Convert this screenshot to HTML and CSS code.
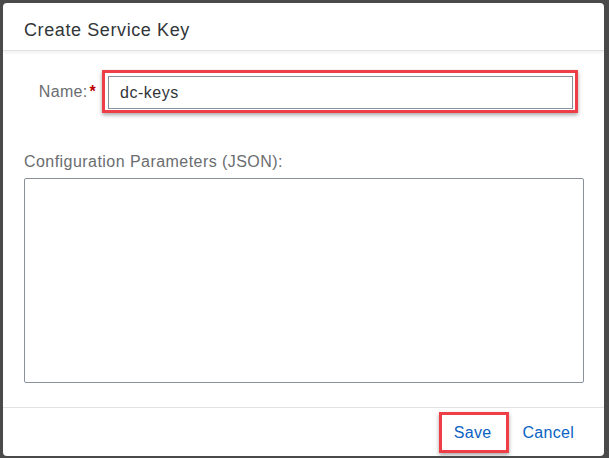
FILE: index.html
```html
<!DOCTYPE html>
<html>
<head>
<meta charset="utf-8">
<link rel="stylesheet" href="styles.css">
</head>
<body>
<div class="screen">
  <div class="dialog">
    <div class="header"><h1 class="title">Create Service Key</h1></div>
    <div class="content">
      <div class="row">
        <label class="label">Name:<span class="req">*</span></label>
        <div class="highlight">
          <div class="input">dc-keys</div>
        </div>
      </div>
      <div class="cfg-label">Configuration Parameters (JSON):</div>
      <div class="textarea"></div>
    </div>
    <div class="footer">
      <div class="highlight-btn"><span class="btn">Save</span></div>
      <span class="btn cancel">Cancel</span>
    </div>
  </div>
</div>
</body>
</html>
```
FILE: styles.css
```css
html, body {
  margin: 0;
  padding: 0;
}
body {
  background: #4a4a4a;
  font-family: "Liberation Sans", Arial, sans-serif;
}
.screen {
  width: 609px;
  height: 458px;
  box-sizing: border-box;
  padding: 3px 5px 2px 3px;
}
.dialog {
  width: 601px;
  height: 453px;
  background: #fff;
  border-radius: 4px;
  display: flex;
  flex-direction: column;
  overflow: hidden;
}
.header {
  box-sizing: border-box;
  height: 48px;
  padding: 16px 0 0 21px;
  border-bottom: 1px solid #e2e2e2;
  box-shadow: 0 2px 3px rgba(0, 0, 0, 0.06);
}
.title {
  margin: 0;
  font-size: 18px;
  line-height: 22px;
  font-weight: normal;
  color: #32363a;
  letter-spacing: 0.6px;
}
.content {
  flex: 1;
  padding: 19px 26px 0 21px;
}
.row {
  display: flex;
  align-items: center;
}
.label {
  width: 72px;
  text-align: right;
  font-size: 16px;
  line-height: 18px;
  color: #6a6d70;
  margin-right: 6px;
  letter-spacing: 0.3px;
}
.req {
  color: #bb0000;
  margin-left: 2px;
  font-weight: bold;
}
.highlight {
  border: 3px solid #ee3f48;
  padding: 3px 2px 1px 3px;
  box-shadow: 0 2px 4px rgba(0, 0, 0, 0.35);
}
.input {
  box-sizing: border-box;
  width: 465px;
  height: 33px;
  border: 1px solid #89919a;
  padding-left: 11px;
  font-size: 16px;
  line-height: 31px;
  color: #32363a;
  letter-spacing: 0.5px;
}
.cfg-label {
  margin-top: 40px;
  font-size: 16px;
  line-height: 18px;
  color: #6a6d70;
  letter-spacing: 0.45px;
  margin-left: 0;
}
.textarea {
  margin-top: 7px;
  box-sizing: border-box;
  width: 560px;
  height: 205px;
  border: 1px solid #89919a;
  border-radius: 2px;
}
.footer {
  box-sizing: border-box;
  height: 49px;
  border-top: 1px solid #e2e2e2;
  display: flex;
  justify-content: flex-end;
  align-items: flex-start;
  padding: 4px 30px 0 0;
}
.highlight-btn {
  box-sizing: border-box;
  height: 41px;
  border: 3px solid #ee3f48;
  padding: 0 15px 0 12px;
  box-shadow: 0 2px 4px rgba(0, 0, 0, 0.35);
}
.btn {
  display: inline-block;
  font-size: 16px;
  line-height: 35px;
  color: #0a62c2;
  letter-spacing: 0.3px;
}
.cancel {
  margin-left: 13px;
  margin-top: 3px;
}
```
